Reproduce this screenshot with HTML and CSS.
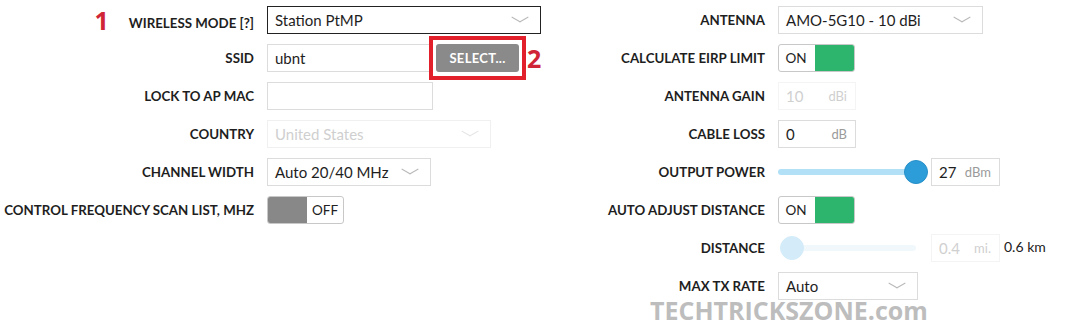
FILE: index.html
```html
<!DOCTYPE html>
<html>
<head>
<meta charset="utf-8">
<link rel="stylesheet" href="styles.css">
</head>
<body>
<div class="page">
  <div class="col left">
    <div class="row">
      <div class="label"><span class="mark">1</span>WIRELESS MODE [?]</div>
      <div class="select dark w-mode"><span>Station PtMP</span><i class="chev"></i></div>
    </div>
    <div class="row">
      <div class="label">SSID</div>
      <div class="ctl">
        <div class="input w-ssid"><span>ubnt</span></div>
        <div class="btn-wrap">
          <button class="btn">SELECT...</button>
          <span class="hl"></span>
          <span class="mark mark2">2</span>
        </div>
      </div>
    </div>
    <div class="row">
      <div class="label">LOCK TO AP MAC</div>
      <div class="input w-ssid"></div>
    </div>
    <div class="row">
      <div class="label">COUNTRY</div>
      <div class="select disabled w-country"><span>United States</span><i class="chev"></i></div>
    </div>
    <div class="row">
      <div class="label">CHANNEL WIDTH</div>
      <div class="select w-chan"><span>Auto 20/40 MHz</span><i class="chev"></i></div>
    </div>
    <div class="row">
      <div class="label">CONTROL FREQUENCY SCAN LIST, MHZ</div>
      <div class="toggle off"><span class="knob"></span><span class="tt">OFF</span></div>
    </div>
  </div>
  <div class="col right">
    <div class="row">
      <div class="label">ANTENNA</div>
      <div class="select w-ant"><span>AMO-5G10 - 10 dBi</span><i class="chev"></i></div>
    </div>
    <div class="row">
      <div class="label">CALCULATE EIRP LIMIT</div>
      <div class="toggle on"><span class="tt">ON</span><span class="knob"></span></div>
    </div>
    <div class="row">
      <div class="label">ANTENNA GAIN</div>
      <div class="input unit faint w-small"><span>10</span><span class="u">dBi</span></div>
    </div>
    <div class="row">
      <div class="label">CABLE LOSS</div>
      <div class="input unit w-small"><span>0</span><span class="u">dB</span></div>
    </div>
    <div class="row">
      <div class="label">OUTPUT POWER</div>
      <div class="ctl">
        <div class="slider"><div class="track"></div><div class="thumb" style="left:126px"></div></div>
        <div class="input unit w-pow"><span>27</span><span class="u">dBm</span></div>
      </div>
    </div>
    <div class="row">
      <div class="label">AUTO ADJUST DISTANCE</div>
      <div class="toggle on"><span class="tt">ON</span><span class="knob"></span></div>
    </div>
    <div class="row">
      <div class="label">DISTANCE</div>
      <div class="ctl">
        <div class="slider faded"><div class="track"></div><div class="thumb" style="left:2px"></div></div>
        <div class="input unit faint w-pow"><span>0.4</span><span class="u">mi.</span></div>
        <span class="km">0.6 km</span>
      </div>
    </div>
    <div class="row">
      <div class="label">MAX TX RATE</div>
      <div class="select w-tx"><span>Auto</span><i class="chev"></i></div>
    </div>
  </div>
  <div class="watermark">TECHTRICKSZONE.com</div>
</div>
</body>
</html>
```
FILE: styles.css
```css
* { box-sizing: border-box; }
html, body { margin: 0; padding: 0; background: #fff; }
body { font-family: Lato, "Open Sans", sans-serif; color: #222; width: 1066px; height: 336px; overflow: hidden; }
.page { position: relative; display: flex; padding-top: 6px; height: 336px; }
.col { display: flex; flex-direction: column; gap: 10px; }
.left { width: 560px; }
.row { display: grid; grid-template-columns: 254px auto; column-gap: 13px; align-items: center; height: 28px; }
.right .row { grid-template-columns: 205px auto; }
.label { text-align: right; font-weight: 700; font-size: 13.3px; color: #1e1e1e; white-space: nowrap; }
.mark { color: #d02536; font-weight: 700; font-size: 25px; line-height: 20px; font-family: "Open Sans", sans-serif; margin-right: 20px; vertical-align: -2px; }
.ctl { display: flex; align-items: center; }
.select, .input { height: 28px; border: 1px solid #dcdcdc; display: flex; align-items: center; padding: 0 8px 0 7px; font-size: 15px; color: #1e1e1e; background: #fff; position: relative; }
.select.dark { border-color: #222; }
.select.disabled { border-color: #f0f0f0; color: #cfcfcf; }
.input.faint { border-color: #f4f4f4; color: #d0d0d0; }
.chev { position: absolute; right: 12px; top: 8px; width: 16px; height: 8px; }
.chev::before, .chev::after { content: ""; position: absolute; top: 4px; width: 10px; height: 1px; background: #b8b8b8; }
.chev::before { left: -1px; transform: rotate(30deg); }
.chev::after { right: -1px; transform: rotate(-30deg); }
.select.disabled .chev::before, .select.disabled .chev::after { background: #e6e6e6; }
.w-mode { width: 274px; }
.w-ssid { width: 166px; }
.w-country { width: 224px; }
.w-chan { width: 164px; }
.w-ant { width: 205px; }
.w-tx { width: 140px; }
.w-small { width: 78px; }
.w-pow { width: 69px; }
.unit { justify-content: space-between; }
.u { color: #9a9a9a; font-size: 13px; }
.faint .u { color: #cfcfcf; }
.btn-wrap { position: relative; margin-left: 3px; }
.btn { display: block; width: 83px; height: 28px; border: 0; border-radius: 3px; background: #8a8a8a; color: #fff; font-family: Lato, sans-serif; font-weight: 700; font-size: 13px; letter-spacing: 0.3px; padding: 0; }
.hl { position: absolute; left: -7px; top: -8px; right: -7px; bottom: -8px; border: 4px solid #e2202c; }
.mark2 { position: absolute; left: 91px; top: 4px; margin: 0; vertical-align: 0; }
.toggle { display: flex; width: 77px; height: 28px; border: 1px solid #c8c8c8; border-radius: 3px; overflow: hidden; font-size: 13.5px; }
.toggle .tt { flex: 1; display: flex; align-items: center; justify-content: center; }
.toggle .knob { width: 39px; }
.toggle.off .knob { background: #888; }
.toggle.on .knob { background: #2db46d; }
.toggle.on .tt { padding-right: 2px; }
.slider { position: relative; width: 150px; height: 28px; }
.track { position: absolute; left: 0; right: 12px; top: 11px; height: 6px; border-radius: 3px; background: #b1e0f7; }
.thumb { position: absolute; top: 2px; width: 24px; height: 24px; border-radius: 50%; background: #2d9dd9; border: 1px solid #268fc8; }
.slider.faded .track { background: #f1f8fc; left: 12px; }
.slider.faded .thumb { background: #d4ecfa; border-color: #d4ecfa; }
.right .slider + .input { margin-left: 3px; }
.km { margin-left: 4px; font-size: 14px; margin-top: -4px; }
.watermark { position: absolute; left: 650px; top: 300px; line-height: 20px; font-family: "Open Sans", sans-serif; font-weight: 700; font-size: 25px; color: #bdbdbd; }
```
